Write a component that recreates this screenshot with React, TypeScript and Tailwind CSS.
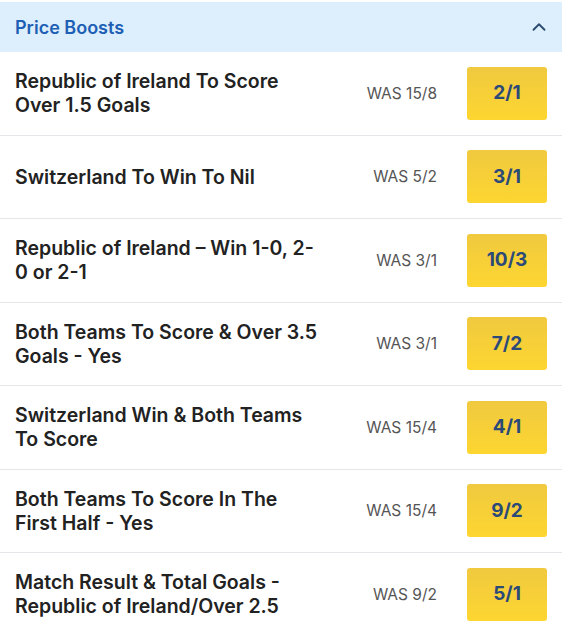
import { ChevronUp } from 'lucide-react'

type BoostType = {
  title: string
  was: string
  price: string
}

const boosts: BoostType[] = [
  { title: 'Republic of Ireland To Score Over 1.5 Goals', was: '15/8', price: '2/1' },
  { title: 'Switzerland To Win To Nil', was: '5/2', price: '3/1' },
  { title: 'Republic of Ireland \u2013 Win 1-0, 2-0 or 2-1', was: '3/1', price: '10/3' },
  { title: 'Both Teams To Score & Over 3.5 Goals - Yes', was: '3/1', price: '7/2' },
  { title: 'Switzerland Win & Both Teams To Score', was: '15/4', price: '4/1' },
  { title: 'Both Teams To Score In The First Half - Yes', was: '15/4', price: '9/2' },
  { title: 'Match Result & Total Goals - Republic of Ireland/Over 2.5', was: '9/2', price: '5/1' },
]

function BoostRow({ title, was, price }: BoostType) {
  return (
    <div className="flex h-[83.5px] items-center border-b border-[#e4e6e9] pl-[15px] pr-[15px]">
      <div className="w-[305px] shrink-0 text-[19.5px] font-semibold leading-[24px] text-[#222]">
        {title}
      </div>
      <div className="flex-1 pr-[30px] text-right text-[15.5px] text-[#555]">WAS {was}</div>
      <button className="flex h-[53px] w-[80px] items-center justify-center rounded-[3px] bg-gradient-to-b from-[#f0c93f] to-[#fdd630] text-[19px] font-bold text-[#2b4a78]">
        {price}
      </button>
    </div>
  )
}

export default function App() {
  return (
    <div className="w-[562px] bg-white font-['Inter',sans-serif]">
      <div className="flex h-[52px] items-center justify-between border-t-2 border-white bg-[#ddeefc] pl-[15px] pr-[12px]">
        <h2 className="text-[18px] font-semibold text-[#1d5fb5]">Price Boosts</h2>
        <ChevronUp className="h-[22px] w-[22px] text-[#2a4a70]" strokeWidth={2} />
      </div>
      {boosts.map((b) => (
        <BoostRow key={b.title} {...b} />
      ))}
    </div>
  )
}
